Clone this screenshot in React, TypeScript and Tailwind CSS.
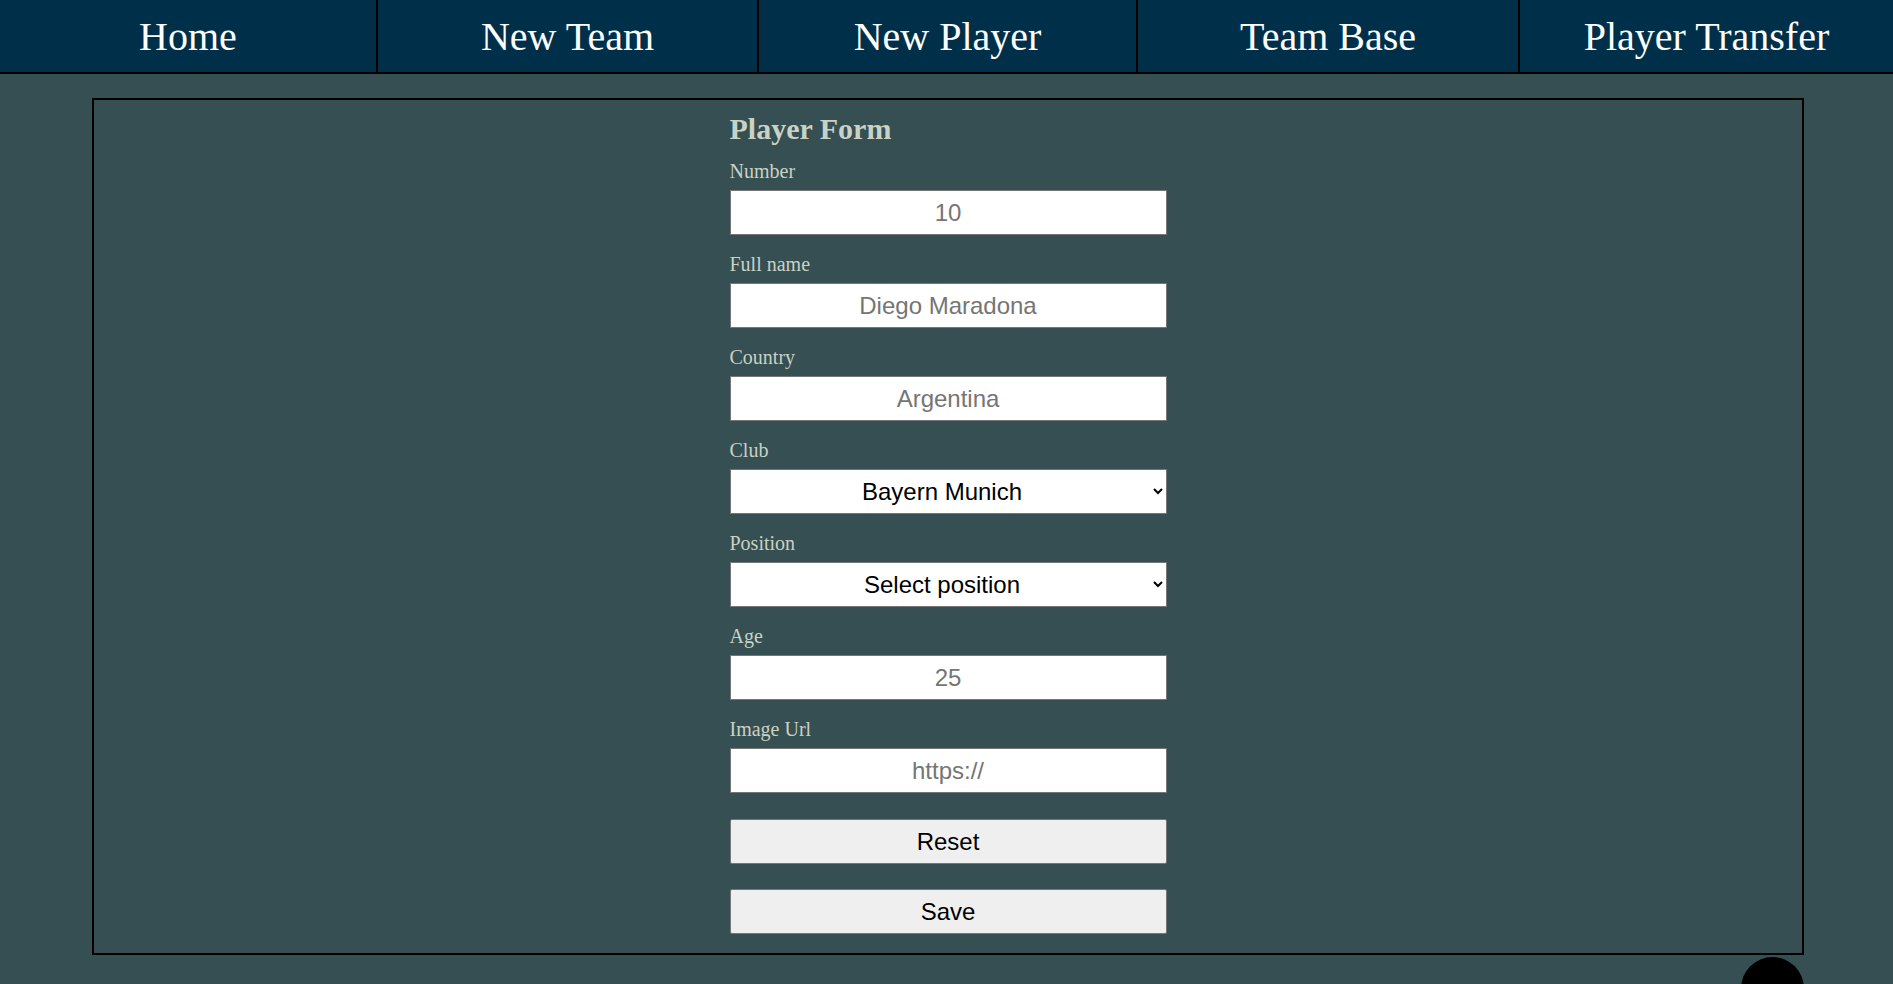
import React, { useState } from 'react';

const navItems = ['Home', 'New Team', 'New Player', 'Team Base', 'Player Transfer'];

const clubs = ['Bayern Munich', 'Real Madrid', 'Barcelona', 'Napoli'];
const positions = ['Goalkeeper', 'Defender', 'Midfielder', 'Forward'];

const serif = { fontFamily: '"Liberation Serif", "Times New Roman", serif' };

const Field: React.FC<{ label: string; children: React.ReactNode }> = ({ label, children }) => (
  <div className="mb-[18px]">
    <label className="block text-[20px] leading-[22px] text-[#cad2c5] mb-[8px]">{label}</label>
    {children}
  </div>
);

const inputCls =
  "block w-full h-[45px] bg-white border border-[#767676] text-center text-[24px] text-black placeholder:text-[#757575] outline-none font-['Liberation_Sans',Arial,sans-serif]";

const btnCls =
  "block w-full h-[45px] bg-[#efefef] border border-[#767676] rounded-[2px] text-[24px] text-black font-['Liberation_Sans',Arial,sans-serif]";

const App: React.FC = () => {
  const [club, setClub] = useState('Bayern Munich');
  const [position, setPosition] = useState('');

  return (
    <div className="min-h-screen bg-[#354f52] overflow-hidden" style={serif}>
      <nav className="grid grid-cols-[376px_381px_379px_382px_1fr] h-[74px] bg-[#003049] border-b-2 border-black">
        {navItems.map((item, i) => (
          <a
            key={item}
            href="#"
            className={
              'flex items-center justify-center pt-[2px] text-white text-[40px] leading-none' +
              (i > 0 ? ' border-l-2 border-black' : '')
            }
          >
            {item}
          </a>
        ))}
      </nav>

      <main className="ml-[92px] w-[1712px] mt-[24px] border-2 border-black">
        <form className="w-[437px] mx-auto pt-[12px] pb-[19px]" onSubmit={(e) => e.preventDefault()}>
          <h2 className="text-[30px] leading-[34px] font-bold text-[#cad2c5] mb-[14px]">Player Form</h2>

          <Field label="Number">
            <input className={inputCls} type="text" placeholder="10" />
          </Field>
          <Field label="Full name">
            <input className={inputCls} type="text" placeholder="Diego Maradona" />
          </Field>
          <Field label="Country">
            <input className={inputCls} type="text" placeholder="Argentina" />
          </Field>
          <Field label="Club">
            <select className={inputCls} value={club} onChange={(e) => setClub(e.target.value)}>
              {clubs.map((c) => (
                <option key={c} value={c}>{c}</option>
              ))}
            </select>
          </Field>
          <Field label="Position">
            <select className={inputCls} value={position} onChange={(e) => setPosition(e.target.value)}>
              <option value="">Select position</option>
              {positions.map((p) => (
                <option key={p} value={p}>{p}</option>
              ))}
            </select>
          </Field>
          <Field label="Age">
            <input className={inputCls} type="text" placeholder="25" />
          </Field>
          <Field label="Image Url">
            <input className={inputCls} type="text" placeholder="https://" />
          </Field>

          <button type="reset" className={btnCls + ' mt-[26px]'}>Reset</button>
          <button type="submit" className={btnCls + ' mt-[25px]'}>Save</button>
        </form>
      </main>

      <div className="ml-[92px] w-[1712px] flex justify-end">
        <div className="w-[63px] h-[63px] rounded-full bg-black mt-[2px]" />
      </div>
    </div>
  );
};

export default App;
